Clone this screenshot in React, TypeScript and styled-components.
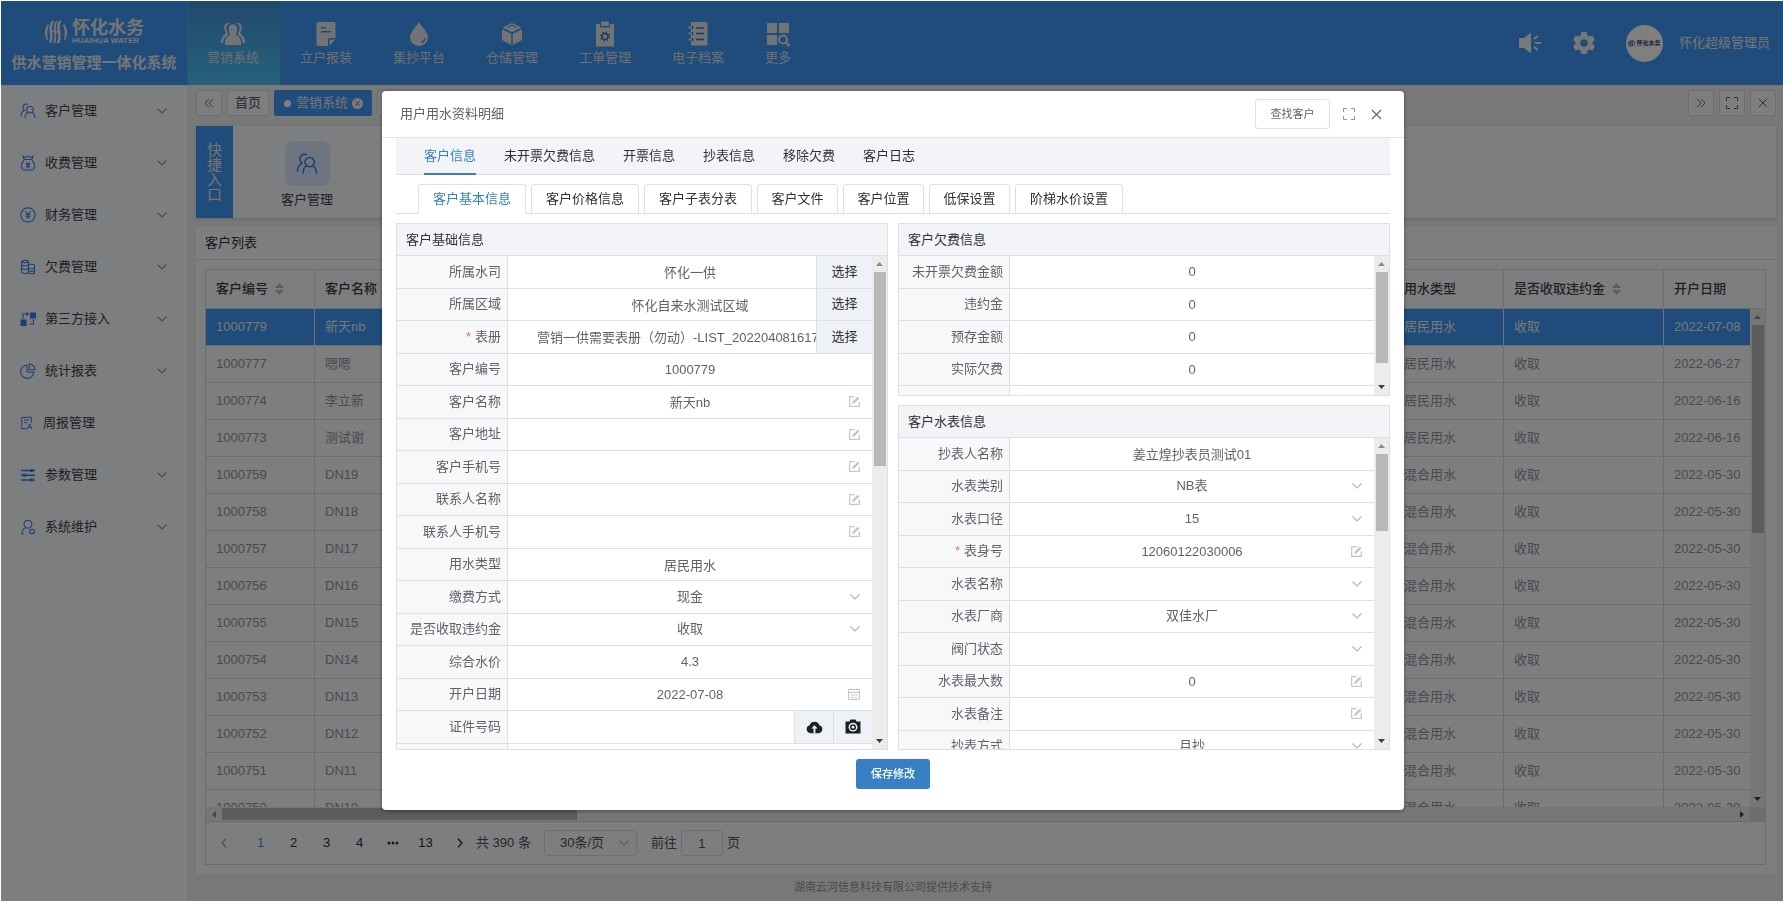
import React from "react";
import styled, { createGlobalStyle, css } from "styled-components";

const theme = {
  header: "#3e98f6",
  primary: "#3880c4",
  page: "#f0f1f3",
  panel: "#fafcff",
  line: "#dcdfe6",
};

const GlobalStyle = createGlobalStyle`
  * { box-sizing: border-box; }
  body {
    margin: 0;
    background: #fff;
    font-family: "Liberation Sans", "Noto Sans CJK SC", sans-serif;
    font-size: 13px;
    line-height: 20px;
    color: #303133;
  }
  button, input, select { font: inherit; color: inherit; margin: 0; }
  button { cursor: pointer; padding: 0; border: 0; background: none; }
`;

/* ---------- shell ---------- */

const Shell = styled.div`
  display: flex;
  flex-direction: column;
  height: 100vh;
  min-height: 700px;
  padding: 1px 0 0 1px;
`;

const Header = styled.header`
  display: flex;
  flex: none;
  height: 84px;
  background: ${theme.header};
  color: #e8eaee;
`;

const Brand = styled.div`
  width: 186px;
  display: flex;
  flex-direction: column;
  align-items: center;
  padding-top: 18px;
`;

const BrandRow = styled.div`
  display: flex;
  align-items: center;
  gap: 4px;
`;

const BrandName = styled.div`
  font-size: 18px;
  line-height: 18px;
  font-weight: 700;
  small {
    display: block;
    font-size: 8px;
    line-height: 8px;
  }
`;

const BrandTitle = styled.h1`
  margin: 7px 0 0;
  font-size: 15px;
  line-height: 22px;
  font-weight: 700;
`;

const TopNav = styled.nav`
  display: flex;
  flex: 1;
`;

const TopLink = styled.a<{ $active?: boolean }>`
  display: flex;
  flex-direction: column;
  align-items: center;
  padding: 20px 21px 0 19px;
  border-left: 1px solid ${(p) => (p.$active ? "#52a8f4" : "transparent")};
  color: #dcdfe4;
  text-decoration: none;
  line-height: 22px;
  background: ${(p) => (p.$active ? "linear-gradient(#4294dc, #4cc4f4)" : "none")};
  svg { fill: #e4e6ea; }
`;

const UserArea = styled.div`
  display: flex;
  align-items: center;
  padding-right: 13px;
`;

const HeaderButton = styled.button`
  display: flex;
  width: 24px;
  height: 24px;
  margin-right: 30px;
  align-items: center;
  justify-content: center;
  svg { fill: #f0f0f0; }
`;

const Avatar = styled.span`
  display: flex;
  align-items: center;
  justify-content: center;
  gap: 1px;
  width: 37px;
  height: 37px;
  margin-right: 16px;
  border-radius: 50%;
  background: #fff;
  color: #2c4a78;
  font-size: 6px;
  line-height: 8px;
  font-weight: 700;
`;

const Main = styled.div`
  display: flex;
  flex: 1;
  min-height: 0;
`;

const Sidebar = styled.nav`
  flex: none;
  width: 186px;
  background: ${theme.panel};
`;

const SideLink = styled.a`
  display: flex;
  align-items: center;
  gap: 9px;
  height: 52px;
  padding: 0 20px 0 19px;
  color: #404246;
  text-decoration: none;
  > svg:first-child { flex: none; }
  span { flex: 1; }
`;

const Content = styled.div`
  display: flex;
  flex: 1;
  flex-direction: column;
  min-width: 0;
  padding: 5px 7px 0 9px;
  background: ${theme.page};
`;

const TagBar = styled.div`
  display: flex;
  flex: none;
  gap: 5px;
  height: 26px;
  margin-bottom: 10px;
`;

const Spacer = styled.span`
  flex: 1;
`;

const Tag = styled.button<{ $active?: boolean; $square?: boolean }>`
  display: flex;
  align-items: center;
  justify-content: center;
  gap: 4px;
  height: 26px;
  width: ${(p) => (p.$square ? "26px" : "auto")};
  padding: 0 ${(p) => (p.$square ? "0" : p.$active ? "8px" : "7px")};
  border: 1px solid ${(p) => (p.$active ? theme.header : "#dddfe3")};
  border-radius: 2px;
  background: ${(p) => (p.$active ? theme.header : theme.panel)};
  color: ${(p) => (p.$active ? "#e8eaee" : "#505256")};
`;

const Dot = styled.i`
  width: 7px;
  height: 7px;
  margin: 0 1px;
  border-radius: 50%;
  background: #fff;
`;

const Quick = styled.section`
  display: flex;
  flex: none;
  height: 92px;
  margin-bottom: 9px;
  background: ${theme.panel};
  box-shadow: 0 1px 3px rgba(0, 0, 0, 0.16);
`;

const QuickLabel = styled.h2`
  display: flex;
  align-items: center;
  justify-content: center;
  width: 37px;
  margin: 0;
  padding: 0 11px;
  background: ${theme.header};
  color: #e8eaee;
  font-size: 15px;
  line-height: 15px;
  font-weight: 400;
`;

const QuickLink = styled.a`
  display: flex;
  flex-direction: column;
  align-items: center;
  gap: 4px;
  margin-left: 48px;
  padding-top: 15px;
  color: #404246;
  text-decoration: none;
`;

const QuickTile = styled.span`
  display: flex;
  align-items: center;
  justify-content: center;
  width: 45px;
  height: 45px;
  border-radius: 8px;
  background: #dceafc;
`;

const ListPanel = styled.section`
  display: flex;
  flex: 1;
  flex-direction: column;
  min-height: 0;
  background: ${theme.panel};
`;

const ListTitle = styled.h2`
  flex: none;
  height: 33px;
  margin: 0;
  padding: 0 9px;
  border-bottom: 1px solid #e2e4e8;
  font-size: 13px;
  line-height: 32px;
  font-weight: 400;
`;

const ListFrame = styled.div`
  display: flex;
  flex: 1;
  flex-direction: column;
  min-height: 0;
  margin: 9px 10px 9px 9px;
  border: 1px solid #d6d9de;
`;

const DataTable = styled.table`
  width: 100%;
  table-layout: fixed;
  border-collapse: separate;
  border-spacing: 0;
  th, td {
    padding: 0 10px;
    border-right: 1px solid #d9dce2;
    border-bottom: 1px solid #d9dce2;
    text-align: left;
    white-space: nowrap;
  }
  th { height: 39px; font-weight: 500; color: #404246; }
  th:last-child, td:last-child { border-right: 0; }
  td { height: 37px; color: #94969c; }
`;

const DataRow = styled.tr<{ $selected?: boolean }>`
  ${(p) =>
    p.$selected &&
    css`
      && td {
        background: ${theme.header};
        border-right-color: #e4e8f0;
        color: #f0f0f0;
      }
    `}
`;

const Clip = styled.div`
  flex: 1;
  min-width: 0;
  min-height: 0;
  overflow: hidden;
`;

const ScrollRow = styled.div`
  display: flex;
  flex: 1;
  min-height: 0;
`;

const SortMark = styled.svg`
  margin-left: 7px;
  vertical-align: -2px;
  fill: #b8bac0;
`;

/* ---------- scroll bars ---------- */

const VTrack = styled.div`
  display: flex;
  flex: none;
  flex-direction: column;
  align-items: center;
  width: 15px;
  padding: 5px 0 5px;
  background: #ececec;
`;

const VThumb = styled.div<{ $size: number }>`
  width: 12px;
  height: ${(p) => p.$size}px;
  margin: 5px 0 auto;
  background: #b8b8b8;
`;

const HTrack = styled.div`
  display: flex;
  flex: none;
  align-items: center;
  height: 15px;
  padding: 0 5px;
  background: #ececec;
  border-bottom: 1px solid #d0d2d6;
`;

const HThumb = styled.div`
  width: 355px;
  height: 12px;
  margin: 0 auto 0 5px;
  background: #b8b8b8;
`;

const ScrollFoot = styled.div`
  display: flex;
  > :first-child { flex: 1; }
`;

const Corner = styled.div`
  width: 15px;
  background: #dcdcdc;
`;

const Triangle = ({ dir, tone }: { dir: "up" | "down" | "left" | "right"; tone: string }) => {
  const d = { up: "M0 5L3.5 1L7 5Z", down: "M0 1L7 1L3.5 5Z", left: "M5 0V7L1 3.5Z", right: "M1 0V7L5 3.5Z" }[dir];
  const flat = dir === "up" || dir === "down";
  return (
    <svg width={flat ? 7 : 6} height={flat ? 6 : 7} fill={tone}>
      <path d={d} />
    </svg>
  );
};

const VScroll = ({ size }: { size: number }) => (
  <VTrack>
    <Triangle dir="up" tone="#8c8c8c" />
    <VThumb $size={size} />
    <Triangle dir="down" tone="#404040" />
  </VTrack>
);

/* ---------- pagination ---------- */

const Pager = styled.div`
  display: flex;
  flex: none;
  align-items: center;
  height: 42px;
  padding-left: 1px;
  color: #505256;
`;

const PageNumbers = styled.div`
  display: flex;
  margin: 0 1px 0 4px;
`;

const PageButton = styled.button<{ $on?: boolean }>`
  display: flex;
  align-items: center;
  justify-content: center;
  width: 33px;
  height: 26px;
  font-weight: 500;
  color: ${(p) => (p.$on ? "#4a90f0" : "#303133")};
`;

const SizeBox = styled.span`
  display: flex;
  align-items: center;
  width: 93px;
  height: 26px;
  margin: 0 14px 0 13px;
  padding: 0 7px 0 0;
  border: 1px solid ${theme.line};
  border-radius: 3px;
  select {
    flex: 1;
    min-width: 0;
    border: 0;
    padding: 0 0 0 15px;
    appearance: none;
    background: none;
    color: #505256;
  }
`;

const JumpInput = styled.input`
  width: 42px;
  height: 26px;
  margin: 0 4px;
  border: 1px solid ${theme.line};
  border-radius: 3px;
  background: none;
  text-align: center;
`;

const Footer = styled.footer`
  flex: none;
  height: 27px;
  padding-right: 186px;
  color: #94969c;
  font-size: 11px;
  line-height: 26px;
  text-align: center;
`;

/* ---------- dialog ---------- */

const Overlay = styled.div`
  position: fixed;
  inset: 1px 0 0 1px;
  display: flex;
  align-items: flex-start;
  justify-content: center;
  padding: 90px 0 0 2px;
  background: rgba(0, 0, 0, 0.5);
`;

const Dialog = styled.div`
  width: 1022px;
  max-width: 96vw;
  border-radius: 4px;
  background: #fff;
  box-shadow: 0 1px 4px rgba(0, 0, 0, 0.4);
`;

const DialogHead = styled.div`
  display: flex;
  align-items: center;
  height: 47px;
  padding: 0 22px 0 18px;
  border-bottom: 1px solid #dfe1e5;
  color: #606266;
  h2 {
    flex: 1;
    margin: 0;
    font-size: 13px;
    font-weight: 400;
  }
`;

const FindButton = styled.button`
  width: 75px;
  height: 30px;
  margin-right: 13px;
  border: 1px solid ${theme.line};
  border-radius: 3px;
  font-size: 11px;
`;

const IconButton = styled.button`
  display: flex;
  align-items: center;
  justify-content: center;
  width: 12px;
  height: 28px;
  & + & { margin-left: 15px; }
`;

const DialogBody = styled.div`
  padding: 0 14px 21px;
`;

const MainTabs = styled.div`
  display: flex;
  gap: 28px;
  height: 37px;
  padding-left: 28px;
  border-bottom: 1px solid ${theme.line};
  background: #f2f4f7;
`;

const MainTab = styled.button<{ $on?: boolean }>`
  height: 37px;
  color: ${(p) => (p.$on ? theme.primary : "#303133")};
  border-bottom: 2px solid ${(p) => (p.$on ? theme.primary : "transparent")};
`;

const SubTabs = styled.div`
  display: flex;
  gap: 5px;
  height: 30px;
  margin: 9px 0 9px;
  padding-left: 22px;
  border-bottom: 1px solid ${theme.line};
`;

const SubTab = styled.button<{ $on?: boolean; $short?: boolean }>`
  width: ${(p) => (p.$short ? "81px" : "108px")};
  height: 30px;
  border: 1px solid ${theme.line};
  border-bottom-color: ${(p) => (p.$on ? "#fff" : theme.line)};
  border-radius: 3px 3px 0 0;
  background: #fff;
  color: ${(p) => (p.$on ? theme.primary : "#303133")};
`;

const Columns = styled.div`
  display: grid;
  grid-template-columns: 1fr 1fr;
  gap: 10px;
  height: 527px;
`;

const RightColumn = styled.div`
  display: grid;
  grid-template-rows: 173px 1fr;
  gap: 9px;
  min-height: 0;
`;

const Panel = styled.section`
  display: flex;
  flex-direction: column;
  min-height: 0;
  border: 1px solid ${theme.line};
`;

const PanelTitle = styled.h3`
  flex: none;
  height: 32px;
  margin: 0;
  padding-left: 9px;
  border-bottom: 1px solid ${theme.line};
  background: #f2f4f7;
  font-size: 13px;
  line-height: 31px;
  font-weight: 400;
`;

const FieldList = styled.div<{ $height: number }>`
  display: grid;
  grid-auto-rows: 1fr;
  height: ${(p) => p.$height}px;
`;

const Field = styled.div`
  display: flex;
  min-height: 0;
  border-bottom: 1px solid ${theme.line};
`;

const FieldLabel = styled.label`
  display: flex;
  flex: none;
  align-items: center;
  justify-content: flex-end;
  width: 111px;
  padding-right: 6px;
  border-right: 1px solid ${theme.line};
  background: #f7f8fa;
  color: #606266;
  b {
    margin-right: 4px;
    color: #f56c6c;
    font-weight: 400;
  }
`;

const FieldValue = styled.div`
  position: relative;
  flex: 1;
  min-width: 0;
`;

const controlStyle = css`
  display: block;
  width: 100%;
  height: 100%;
  border: 0;
  padding: 0 29px;
  background: none;
  outline: 0;
  color: #606266;
`;

const TextInput = styled.input<{ $long?: boolean }>`
  ${controlStyle}
  text-align: ${(p) => (p.$long ? "left" : "center")};
`;

const SelectInput = styled.select`
  ${controlStyle}
  appearance: none;
  text-align: center;
  text-align-last: center;
`;

const Suffix = styled.span`
  position: absolute;
  top: 0;
  right: 12px;
  bottom: 0;
  display: flex;
  align-items: center;
  pointer-events: none;
`;

const Addons = styled.div`
  position: absolute;
  top: 0;
  right: 0;
  bottom: 0;
  display: flex;
`;

const Addon = styled.button<{ $icon?: boolean }>`
  display: flex;
  align-items: center;
  justify-content: center;
  width: ${(p) => (p.$icon ? "39px" : "56px")};
  border-left: 1px solid ${theme.line};
  background: #eef2f6;
`;

const SaveButton = styled.button`
  display: block;
  width: 74px;
  height: 30px;
  margin: 9px auto 0;
  border-radius: 3px;
  background: ${theme.primary};
  color: #fff;
  font-size: 11px;
  font-weight: 500;
`;

/* ---------- icons ---------- */

const Chevron = ({ tone = "#b4b7be" }: { tone?: string }) => (
  <svg width="10" height="8" viewBox="0 0 10 8" fill="none" stroke={tone} strokeWidth="1.2">
    <path d="M.5 1.5L5 6L9.5 1.5" />
  </svg>
);

const EditIcon = () => (
  <svg width="11" height="11" viewBox="0 0 11 11" fill="none" stroke="#c2c5cb" strokeWidth="1.2">
    <path d="M5.5 .7H.7v9.600h9.600V5.500" />
    <path d="M3.600 7.400L4 5.600L8.700 .9L10.200 2.400L5.400 7Z" fill="#c2c5cb" strokeWidth=".6" />
  </svg>
);

const CalendarIcon = () => (
  <svg width="12" height="12" viewBox="0 0 12 12" fill="none" stroke="#c0c4cc">
    <path d="M.5 1.5h11v10H.5zM.5 4.500h11M3 0v2.500M9 0v2.500" />
    <path d="M2.500 7h7M2.500 9.500h7" strokeDasharray="2 .5" />
  </svg>
);

const CloudIcon = () => (
  <svg width="17" height="14" viewBox="0 0 17 14">
    <path d="M4.4 13.2A4.1 4.1 0 0 1 3.6 5.2A5.2 5.2 0 0 1 13.4 5.2A4.1 4.1 0 0 1 12.6 13.2Z" fill="#1d2126" />
    <path d="M8.5 5.2L5.4 8.4h2.2v4.8h1.8V8.4h2.2z" fill="#eef2f6" />
  </svg>
);

const CameraIcon = () => (
  <svg width="16" height="15" viewBox="0 0 16 15">
    <path d="M.5 2.5H4.4L5.5.6H10.5L11.6 2.5H15.5V14.4H.5Z" fill="#1d2126" />
    <circle cx="8" cy="8.2" r="4.4" fill="#eef2f6" />
    <circle cx="8" cy="8.2" r="3" fill="#1d2126" />
    <circle cx="8" cy="8.2" r="1.4" fill="#eef2f6" />
  </svg>
);

const FullIcon = ({ tone = "#909399" }: { tone?: string }) => (
  <svg width="12" height="12" viewBox="0 0 12 12" fill="none" stroke={tone}>
    <path d="M.5 4V.5H4M8 .5h3.5V4M11.5 8v3.5H8M4 11.5H.5V8" />
  </svg>
);

const CloseIcon = ({ size = 11 }: { size?: number }) => (
  <svg width={size} height={size} viewBox="0 0 11 11" fill="none" stroke="#606266" strokeWidth="1.1">
    <path d="M1 1L10 10M10 1L1 10" />
  </svg>
);

const Doubled = ({ right }: { right?: boolean }) => (
  <svg width="10" height="10" viewBox="0 0 10 10" fill="none" stroke="#707276">
    <path d={right ? "M1 .8L5 5L1 9.2M5 .8L9 5L5 9.2" : "M5 .8L1 5L5 9.2M9 .8L5 5L9 9.2"} />
  </svg>
);

const Angle = ({ right, tone }: { right?: boolean; tone: string }) => (
  <svg width="8" height="10" viewBox="0 0 8 10" fill="none" stroke={tone} strokeWidth="1.4">
    <path d={right ? "M2 .8L6 5L2 9.2" : "M6 .8L2 5L6 9.2"} />
  </svg>
);

const Sorter = () => (
  <SortMark width="9" height="12">
    <path d="M0 5L4.5 0L9 5ZM0 7H9L4.5 12Z" />
  </SortMark>
);

const LogoMark = ({ size = 24, tone = "#e8eaee" }: { size?: number; tone?: string }) => (
  <svg width={size} height={size} viewBox="0 0 24 24" fill="none" stroke={tone} strokeLinecap="round">
    <path d="M4.2 4.6C1 9 .4 14 3.6 19.6C1.600 14.500 2.500 9.500 4.200 4.600Z" fill={tone} strokeWidth="1.400" />
    <path d="M19.800 4.600C23 9 23.600 14 20.400 19.600C22.400 14.500 21.500 9.500 19.800 4.600Z" fill={tone} strokeWidth="1.400" />
    <path d="M8.600 1.800C3.500 9.500 9.800 14 6.400 21.600" strokeWidth="2.600" />
    <path d="M12.400 1.400C8 9 14 14 10.200 22.600" strokeWidth="1.800" />
    <path d="M15.800 1.600C11.500 9 18.500 14 14.200 22.200" strokeWidth="2.600" />
    <path d="M8 11.500C10.500 10 13 13.500 16 11.500" strokeWidth="1.600" />
  </svg>
);

const gearPath =
  "M8.500 1H13.500L14.200 4.100L16.400 5.400L19.400 4.400L21.900 8.700L19.600 10.800V13.200L21.900 15.300L19.400 19.600L16.400 18.600L14.200 19.900L13.500 23H8.500L7.800 19.900L5.600 18.600L2.600 19.600L.1 15.300L2.400 13.200V10.800L.1 8.700L2.600 4.400L5.600 5.400L7.800 4.100ZM11 8.200A3.800 3.800 0 1 0 11 15.800A3.800 3.800 0 1 0 11 8.200Z";

const navIcons: Record<string, React.ReactNode> = {
  people: (
    <>
      <path d="M13 3.200C9.600 3.200 8.400 6 8.800 9.200C9 11 9.800 12.300 10.300 13.200C9.500 14.600 5 15.500 5 21V24H21V21C21 15.500 16.500 14.600 15.700 13.200C16.200 12.300 17 11 17.200 9.200C17.600 6 16.400 3.200 13 3.200Z" />
      <path d="M10 2C5.500.8 3.600 4.500 4.500 8.400C4.800 10 5.600 11 6 11.700C5.500 13.500.8 14.500.8 22H3.200C3.200 17 5.800 15.500 8.200 13.600C8.300 12 5.800 9.500 6.500 6C7 3.600 8.500 2.800 10 2Z" />
      <path d="M16 2C20.500.8 22.400 4.500 21.500 8.400C21.200 10 20.400 11 20 11.700C20.500 13.500 25.200 14.500 25.200 22H22.800C22.800 17 20.200 15.500 17.800 13.600C17.700 12 20.200 9.500 19.500 6C19 3.600 17.500 2.800 16 2Z" />
    </>
  ),
  form: (
    <path
      fillRule="evenodd"
      d="M5 1H21Q22.500 1 22.500 2.500V17H16.500Q15 17 15 18.500V25H5Q3.500 25 3.500 23.500V2.500Q3.500 1 5 1ZM8 6V7.500H13V6ZM8 10V11.500H18V10ZM16.500 18.500H22.300L16.500 24.800Z"
    />
  ),
  drop: (
    <>
      <path d="M13 .8C11 5 4 11 4 16.500A9 8.500 0 0 0 22 16.500C22 11 15 5 13 .8Z" />
      <path d="M18.800 17.500Q18.500 20.500 15.500 21.500" fill="none" stroke="#4290e0" strokeWidth="1.400" />
    </>
  ),
  box: (
    <>
      <path d="M13 2L22.500 6.500L13 11.300L3.500 6.500Z" />
      <path d="M3 8.200L12.300 12.900V24L3 19Z" />
      <path d="M23 8.200L13.700 12.900V24L23 19Z" />
      <path d="M8 6.800L13 4.400L18 6.800" fill="none" stroke="#4290e0" strokeWidth="1" />
    </>
  ),
  work: (
    <>
      <path d="M4 3H8V6.500H18V3H22V25.500H4Z" />
      <path d="M9 1.500Q9 .5 10 .5H16Q17 .5 17 1.500V5H9Z" />
      <circle cx="13" cy="15.500" r="3" fill="none" stroke="#3874b8" strokeWidth="1.500" />
      <circle cx="13" cy="15.500" r="4.400" fill="none" stroke="#3874b8" strokeWidth="1.400" strokeDasharray="1.400 2.056" />
    </>
  ),
  book: (
    <>
      <path d="M6 1H21Q22.500 1 22.500 2.500V23Q22.500 24.500 21 24.500H6Z" />
      <path d="M3.500 6.500H8M3.500 12.500H8M3.500 18.500H8" stroke="#e4e6ea" strokeWidth="1.800" />
      <path d="M11 7H19M11 12.500H19M11 18.500H19M7.500 5V8M7.500 11V14M7.500 17V20" stroke="#3874b8" strokeWidth="1.300" />
    </>
  ),
  more: (
    <>
      <path d="M2 2H12V12H2ZM14 2H24V12H14ZM2 14H12V24H2Z" />
      <circle cx="18" cy="18.500" r="4" fill="none" stroke="#e4e6ea" strokeWidth="2.200" />
      <path d="M21 21.500L24.500 25" stroke="#e4e6ea" strokeWidth="2.400" />
    </>
  ),
};

const sideIcons: Record<string, React.ReactNode> = {
  people: (
    <path d="M10 3.200A3.400 3.400 0 1 1 9.900 3.200M7.800 9C5.800 10.200 5.200 12 5 15M12 9C14.200 10.200 14.800 12 15 15M8 1.300C5 .2 2.300 2.300 3 5.300C3.200 6.300 3.800 7 4.400 7.500C2 8.600 1 10.800 1 13.500" />
  ),
  bag: (
    <path d="M3 1.200L5.500 2.500L8 1.200L10.500 2.500L13 1.200L11.800 4.500H4.200ZM4 5.500C1.500 8 1.200 10.500 1.500 12.500Q2 15 4.500 15H11.500Q14 15 14.500 12.500C14.800 10.500 14.500 8 12 5.500M6 7.500L8 9.500L10 7.500M8 9.500V13.200M6 9.800H10M6 11.600H10" />
  ),
  yuan: <path d="M8 .9A7.100 7.100 0 1 1 7.900 .9M5.500 4.300L8 7.300L10.500 4.300M8 7.300V12M5.500 7.600H10.500M5.500 9.700H10.500" />,
  coins: (
    <path d="M1.500 2.500Q5 0 8.500 2.500V13.500Q5 15.500 1.500 13.500ZM1.500 2.500Q5 5 8.500 2.500M1.500 6Q5 8 8.500 6M1.500 9.500Q5 11.500 8.500 9.500M8.500 6Q11.500 4.500 14.500 6V14Q11.500 15.500 8.500 14M8.500 9Q11.500 10.500 14.500 9M8.500 11.800Q11.500 13 14.500 11.800" />
  ),
  link: (
    <>
      <path d="M1 9H6V14.500H1ZM10.500 2H15.500V7H10.500Z" fill="#3f7fe8" />
      <path d="M3 8V3H8M6.500 1.300L8.400 3L6.500 4.700M13.500 8V13H9.500" />
    </>
  ),
  pie: <path d="M7 2.200A6.600 6.600 0 1 0 13.800 9H7ZM9.200 1V6.800H15C15 3.500 12.500 1 9.200 1Z" />,
  sheet: (
    <path d="M8 14.500H2V1.500H13V8M4.500 4.500H10.500M4.500 7.500H8M8.500 14.800L11 9L13.500 14.800M9.300 13H12.700" />
  ),
  sliders: (
    <>
      <path d="M1 3.500H15M1 8.300H15M1 13H15" strokeWidth="1.400" />
      <path d="M10.500 2.500H12.500V4.500H10.500ZM3.500 7.300H5.500V9.300H3.500ZM10.500 12H12.500V14H10.500Z" fill="#3f7fe8" />
    </>
  ),
  person: (
    <>
      <path d="M8 1.200A4 4 0 1 1 7.900 1.200M5.500 8.500C3 9.800 2 12 2 15H4" />
      <circle cx="12" cy="12.500" r="2.300" />
    </>
  ),
};

const SideIcon = ({ name, size = 15 }: { name: string; size?: number }) => (
  <svg width={size} height={size} viewBox="0 0 16 16" fill="none" stroke="#3f7fe8" strokeWidth="1.100">
    {sideIcons[name]}
  </svg>
);

/* ---------- data ---------- */

const topNav = [
  ["people", "营销系统"],
  ["form", "立户报装"],
  ["drop", "集抄平台"],
  ["box", "仓储管理"],
  ["work", "工单管理"],
  ["book", "电子档案"],
  ["more", "更多"],
];

const sideNav = [
  ["people", "客户管理"],
  ["bag", "收费管理"],
  ["yuan", "财务管理"],
  ["coins", "欠费管理"],
  ["link", "第三方接入"],
  ["pie", "统计报表"],
  ["sheet", "周报管理"],
  ["sliders", "参数管理"],
  ["person", "系统维护"],
];

const customers = [
  ["1000779", "新天nb", "居民用水", "2022-07-08"],
  ["1000777", "嗯嗯", "居民用水", "2022-06-27"],
  ["1000774", "李立新", "居民用水", "2022-06-16"],
  ["1000773", "测试谢", "居民用水", "2022-06-16"],
  ["1000759", "DN19", "混合用水", "2022-05-30"],
  ["1000758", "DN18", "混合用水", "2022-05-30"],
  ["1000757", "DN17", "混合用水", "2022-05-30"],
  ["1000756", "DN16", "混合用水", "2022-05-30"],
  ["1000755", "DN15", "混合用水", "2022-05-30"],
  ["1000754", "DN14", "混合用水", "2022-05-30"],
  ["1000753", "DN13", "混合用水", "2022-05-30"],
  ["1000752", "DN12", "混合用水", "2022-05-30"],
  ["1000751", "DN11", "混合用水", "2022-05-30"],
  ["1000750", "DN10", "混合用水", "2022-05-30"],
];

type Kind = "plain" | "edit" | "select" | "date" | "pick" | "photo";
type FieldSpec = { label: string; value?: string; kind?: Kind; required?: boolean; long?: boolean };

const basicFields: FieldSpec[] = [
  { label: "所属水司", value: "怀化一供", kind: "pick" },
  { label: "所属区域", value: "怀化自来水测试区域", kind: "pick" },
  { label: "表册", value: "营销一供需要表册（勿动）-LIST_202204081617", kind: "pick", required: true, long: true },
  { label: "客户编号", value: "1000779" },
  { label: "客户名称", value: "新天nb", kind: "edit" },
  { label: "客户地址", kind: "edit" },
  { label: "客户手机号", kind: "edit" },
  { label: "联系人名称", kind: "edit" },
  { label: "联系人手机号", kind: "edit" },
  { label: "用水类型", value: "居民用水" },
  { label: "缴费方式", value: "现金", kind: "select" },
  { label: "是否收取违约金", value: "收取", kind: "select" },
  { label: "综合水价", value: "4.3" },
  { label: "开户日期", value: "2022-07-08", kind: "date" },
  { label: "证件号码", kind: "photo" },
  { label: "" },
];

const debtFields: FieldSpec[] = [
  { label: "未开票欠费金额", value: "0" },
  { label: "违约金", value: "0" },
  { label: "预存金额", value: "0" },
  { label: "实际欠费", value: "0" },
  { label: "" },
  { label: "" },
];

const meterFields: FieldSpec[] = [
  { label: "抄表人名称", value: "姜立煌抄表员测试01" },
  { label: "水表类别", value: "NB表", kind: "select" },
  { label: "水表口径", value: "15", kind: "select" },
  { label: "表身号", value: "12060122030006", kind: "edit", required: true },
  { label: "水表名称", kind: "select" },
  { label: "水表厂商", value: "双佳水厂", kind: "select" },
  { label: "阀门状态", kind: "select" },
  { label: "水表最大数", value: "0", kind: "edit" },
  { label: "水表备注", kind: "edit" },
  { label: "抄表方式", value: "月抄", kind: "select" },
];

const FieldRow = ({ spec, id }: { spec: FieldSpec; id: string }) => {
  const { label, value = "", kind = "plain", required, long } = spec;
  return (
    <Field>
      <FieldLabel htmlFor={id}>
        {required && <b>*</b>}
        {label}
      </FieldLabel>
      <FieldValue>
        {kind === "select" ? (
          <SelectInput id={id} defaultValue={value}>
            <option value={value}>{value}</option>
          </SelectInput>
        ) : (
          <TextInput id={id} defaultValue={value} $long={long} readOnly={kind === "plain"} />
        )}
        {kind === "select" && <Suffix><Chevron /></Suffix>}
        {kind === "edit" && <Suffix><EditIcon /></Suffix>}
        {kind === "date" && <Suffix><CalendarIcon /></Suffix>}
        {kind === "pick" && <Addons><Addon type="button">选择</Addon></Addons>}
        {kind === "photo" && (
          <Addons>
            <Addon type="button" $icon aria-label="上传"><CloudIcon /></Addon>
            <Addon type="button" $icon aria-label="拍照"><CameraIcon /></Addon>
          </Addons>
        )}
      </FieldValue>
    </Field>
  );
};

const FieldPanel = ({ title, fields, height, thumb, prefix }: {
  title: string; fields: FieldSpec[]; height: number; thumb: number; prefix: string;
}) => (
  <Panel>
    <PanelTitle>{title}</PanelTitle>
    <ScrollRow>
      <Clip>
        <FieldList $height={height}>
          {fields.map((f, i) => <FieldRow key={i} spec={f} id={`${prefix}-${i}`} />)}
        </FieldList>
      </Clip>
      <VScroll size={thumb} />
    </ScrollRow>
  </Panel>
);

const ColumnWidths = ({ last }: { last: number }) => (
  <colgroup>
    <col width="109" />
    <col />
    <col width="110" />
    <col width="160" />
    <col width={last} />
  </colgroup>
);

export default function App() {
  return (
    <>
      <GlobalStyle />
      <Shell>
        <Header>
          <Brand>
            <BrandRow>
              <LogoMark />
              <BrandName>怀化水务<small>HUAIHUA WATER</small></BrandName>
            </BrandRow>
            <BrandTitle>供水营销管理一体化系统</BrandTitle>
          </Brand>
          <TopNav>
            {topNav.map(([icon, label], i) => (
              <TopLink key={label} href="#" $active={i === 0}>
                <svg width="26" height="26" viewBox="0 0 26 26">{navIcons[icon]}</svg>
                {label}
              </TopLink>
            ))}
          </TopNav>
          <UserArea>
            <HeaderButton aria-label="消息">
              <svg width="22" height="22" viewBox="0 0 22 22">
                <path d="M1 6H5L12 .5V21.500L5 16H1Q0 16 0 15V7Q0 6 1 6Z" />
                <path d="M15 7L19 4M16 11H22M15 15L19 18" stroke="#f0f0f0" strokeWidth="2" />
              </svg>
            </HeaderButton>
            <HeaderButton aria-label="设置">
              <svg width="22" height="24" viewBox="0 0 22 24"><path fillRule="evenodd" d={gearPath} /></svg>
            </HeaderButton>
            <Avatar><LogoMark size={7} tone="#2c4a78" />怀化水务</Avatar>
            怀化超级管理员
          </UserArea>
        </Header>
        <Main>
          <Sidebar>
            {sideNav.map(([icon, label]) => (
              <SideLink key={label} href="#">
                <SideIcon name={icon} size={icon === "sheet" ? 14 : 16} />
                <span>{label}</span>
                {icon !== "sheet" && <Chevron tone="#96989e" />}
              </SideLink>
            ))}
          </Sidebar>
          <Content>
            <TagBar>
              <Tag $square aria-label="向左"><Doubled /></Tag>
              <Tag>首页</Tag>
              <Tag $active>
                <Dot />营销系统
                <svg width="11" height="11" viewBox="0 0 11 11">
                  <circle cx="5.500" cy="5.500" r="5.500" fill="#f0f0f0" />
                  <path d="M3.500 3.500L7.500 7.500M7.500 3.500L3.500 7.500" stroke="#606266" />
                </svg>
              </Tag>
              <Tag $square aria-hidden="true" />
              <Spacer />
              <Tag $square aria-label="向右"><Doubled right /></Tag>
              <Tag $square aria-label="全屏"><FullIcon tone="#606266" /></Tag>
              <Tag $square aria-label="关闭"><CloseIcon size={10} /></Tag>
            </TagBar>
            <Quick>
              <QuickLabel>快捷入口</QuickLabel>
              <QuickLink href="#">
                <QuickTile><SideIcon name="people" size={22} /></QuickTile>
                客户管理
              </QuickLink>
            </Quick>
            <ListPanel>
              <ListTitle>客户列表</ListTitle>
              <ListFrame>
                <DataTable>
                  <ColumnWidths last={101} />
                  <thead>
                    <tr>
                      <th>客户编号<Sorter /></th>
                      <th>客户名称</th>
                      <th>用水类型</th>
                      <th>是否收取违约金<Sorter /></th>
                      <th>开户日期</th>
                    </tr>
                  </thead>
                </DataTable>
                <ScrollRow>
                  <Clip>
                    <DataTable>
                      <ColumnWidths last={86} />
                      <tbody>
                        {customers.map(([id, name, kind, date], i) => (
                          <DataRow key={id} $selected={i === 0}>
                            <td>{id}</td>
                            <td>{name}</td>
                            <td>{kind}</td>
                            <td>收取</td>
                            <td>{date}</td>
                          </DataRow>
                        ))}
                      </tbody>
                    </DataTable>
                  </Clip>
                  <VScroll size={208} />
                </ScrollRow>
                <ScrollFoot>
                  <HTrack>
                    <Triangle dir="left" tone="#8c8c8c" />
                    <HThumb />
                    <Triangle dir="right" tone="#404040" />
                  </HTrack>
                  <Corner />
                </ScrollFoot>
                <Pager>
                  <PageButton aria-label="上一页"><Angle tone="#a0a2a8" /></PageButton>
                  <PageNumbers>
                    <PageButton $on>1</PageButton>
                    <PageButton>2</PageButton>
                    <PageButton>3</PageButton>
                    <PageButton>4</PageButton>
                    <PageButton aria-label="更多页">
                      <svg width="12" height="4" fill="#303133">
                        <circle cx="2" cy="2" r="1.500" /><circle cx="6" cy="2" r="1.500" /><circle cx="10" cy="2" r="1.500" />
                      </svg>
                    </PageButton>
                    <PageButton>13</PageButton>
                  </PageNumbers>
                  <PageButton aria-label="下一页"><Angle right tone="#303133" /></PageButton>
                  <span>共 390 条</span>
                  <SizeBox>
                    <select aria-label="每页条数" defaultValue="30"><option value="30">30条/页</option></select>
                    <Chevron />
                  </SizeBox>
                  <label htmlFor="jump">前往</label>
                  <JumpInput id="jump" defaultValue="1" />
                  <span>页</span>
                </Pager>
              </ListFrame>
            </ListPanel>
            <Footer>湖南云河信息科技有限公司提供技术支持</Footer>
          </Content>
        </Main>
      </Shell>
      <Overlay>
        <Dialog role="dialog" aria-labelledby="dialog-title">
          <DialogHead>
            <h2 id="dialog-title">用户用水资料明细</h2>
            <FindButton>查找客户</FindButton>
            <IconButton aria-label="全屏"><FullIcon /></IconButton>
            <IconButton aria-label="关闭"><CloseIcon /></IconButton>
          </DialogHead>
          <DialogBody>
            <MainTabs>
              {["客户信息", "未开票欠费信息", "开票信息", "抄表信息", "移除欠费", "客户日志"].map((t, i) => (
                <MainTab key={t} $on={i === 0}>{t}</MainTab>
              ))}
            </MainTabs>
            <SubTabs>
              {["客户基本信息", "客户价格信息", "客户子表分表", "客户文件", "客户位置", "低保设置", "阶梯水价设置"].map((t, i) => (
                <SubTab key={t} $on={i === 0} $short={t.length === 4}>{t}</SubTab>
              ))}
            </SubTabs>
            <Columns>
              <FieldPanel title="客户基础信息" fields={basicFields} height={520} thumb={194} prefix="basic" />
              <RightColumn>
                <FieldPanel title="客户欠费信息" fields={debtFields} height={195} thumb={91} prefix="debt" />
                <FieldPanel title="客户水表信息" fields={meterFields} height={325} thumb={77} prefix="meter" />
              </RightColumn>
            </Columns>
            <SaveButton>保存修改</SaveButton>
          </DialogBody>
        </Dialog>
      </Overlay>
    </>
  );
}
